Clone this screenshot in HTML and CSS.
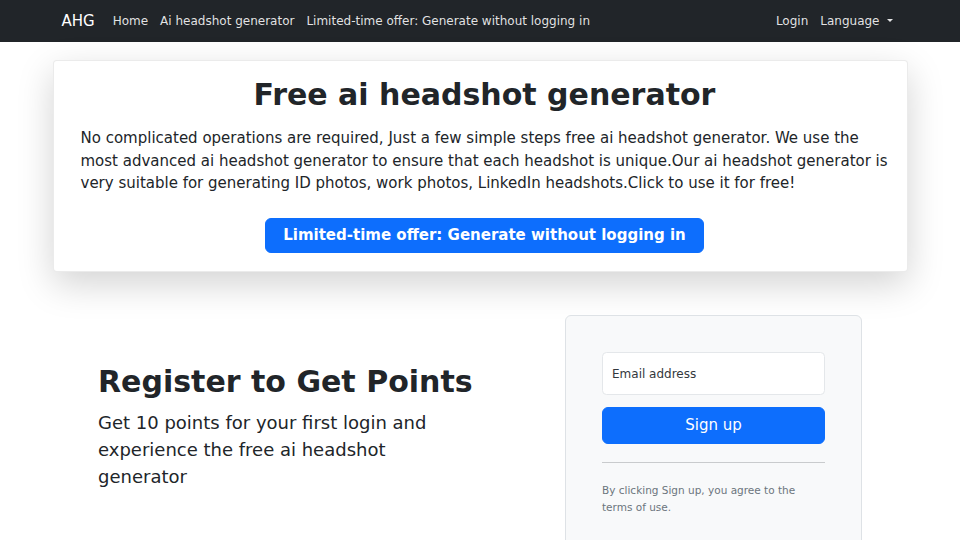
FILE: index.html
```html
<!DOCTYPE html>
<html lang="en">
<head>
<meta charset="utf-8">
<title>Free ai headshot generator - AHG</title>
<link rel="stylesheet" href="styles.css">
</head>
<body>

  <nav class="navbar">
    <div class="container nav-inner">
      <a class="brand" href="#">AHG</a>
      <ul class="nav-links">
        <li><a href="#">Home</a></li>
        <li><a href="#">Ai headshot generator</a></li>
        <li><a href="#">Limited-time offer: Generate without logging in</a></li>
      </ul>
      <ul class="nav-links nav-right">
        <li><a href="#">Login</a></li>
        <li><a href="#" class="dropdown-toggle">Language</a></li>
      </ul>
    </div>
  </nav>

  <div class="container">
    <section class="hero">
      <h1>Free ai headshot generator</h1>
      <p class="lead">No complicated operations are required, Just a few simple steps free ai headshot generator. We use the most advanced ai headshot generator to ensure that each headshot is unique.Our ai headshot generator is very suitable for generating ID photos, work photos, LinkedIn headshots.Click to use it for free!</p>
      <div class="hero-action">
        <a href="#" class="btn btn-lg btn-wide">Limited-time offer: Generate without logging in</a>
      </div>
    </section>
  </div>

  <section class="signup">
    <div class="signup-text">
      <h1>Register to Get Points</h1>
      <p>Get 10 points for your first login and experience the free ai headshot generator</p>
    </div>
    <form class="signup-form" onsubmit="return false;">
      <input type="email" class="form-input" placeholder="Email address">
      <button type="submit" class="btn btn-lg btn-block">Sign up</button>
      <hr>
      <small>By clicking Sign up, you agree to the terms of use.</small>
    </form>
  </section>

</body>
</html>
```

FILE: styles.css
```css
/* Base */
html,
body {
  margin: 0;
  background: #fff;
}

body {
  font-family: "DejaVu Sans", "Liberation Sans", sans-serif;
  font-size: 12px;
  line-height: 1.5;
  color: #212529;
}

a {
  text-decoration: none;
}

.container {
  max-width: 855px;
  margin: 0 auto;
}

/* Navbar */
.navbar {
  background: #212529;
  padding: 6px 0;
}

.nav-inner {
  display: flex;
  align-items: center;
  padding: 0 9px;
  box-sizing: border-box;
}

.brand {
  color: #fff;
  font-size: 15px;
  line-height: 22.5px;
  padding: 3.75px 0;
  margin-right: 12px;
}

.nav-links {
  display: flex;
  list-style: none;
  margin: 0;
  padding: 0;
}

.nav-links a {
  display: block;
  padding: 6px;
  color: rgba(255, 255, 255, 0.88);
}

.nav-right {
  margin-left: auto;
}

.dropdown-toggle::after {
  content: "";
  display: inline-block;
  margin-left: 7px;
  vertical-align: 0.255em;
  border-top: 0.3em solid;
  border-right: 0.3em solid transparent;
  border-left: 0.3em solid transparent;
}

/* Hero card */
.hero {
  margin-top: 18px;
  padding: 16px 18px 18px 27px;
  background: #fff;
  border: 1px solid rgba(0, 0, 0, 0.08);
  border-radius: 4px;
  box-shadow: 0 12px 36px rgba(0, 0, 0, 0.175);
}

.hero h1 {
  margin: 0 0 14px;
  text-align: center;
  font-size: 30px;
  line-height: 36px;
  font-weight: bold;
}

.lead {
  margin: 0 0 12px;
  font-size: 15px;
  line-height: 22.5px;
}

.hero-action {
  display: flex;
  justify-content: center;
  padding-top: 11px;
}

/* Buttons */
.btn {
  display: inline-block;
  box-sizing: border-box;
  background: #0d6efd;
  border: 1px solid #0d6efd;
  color: #fff;
  font-family: inherit;
  text-align: center;
  cursor: pointer;
}

.btn-lg {
  padding: 5.5px 12px;
  font-size: 15px;
  line-height: 22.5px;
  border-radius: 6px;
}

.btn-wide {
  padding-left: 17px;
  padding-right: 17px;
  font-weight: bold;
}

.btn-block {
  display: block;
  width: 100%;
}

/* Sign up section */
.signup {
  max-width: 764px;
  margin: 43px auto 0;
  display: grid;
  grid-template-columns: 1fr 297px;
  column-gap: 35px;
  align-items: center;
}

.signup-text {
  padding-top: 2px;
}

.signup-text h1 {
  margin: 0 0 12px;
  font-size: 30px;
  line-height: 30px;
  font-weight: bold;
}

.signup-text p {
  max-width: 359px;
  margin: 0 0 12px;
  font-size: 18px;
  line-height: 27px;
}

.signup-form {
  padding: 36px 36px 36px;
  background: #f8f9fa;
  border: 1px solid #dee2e6;
  border-radius: 6px;
}

.form-input {
  display: block;
  box-sizing: border-box;
  width: 100%;
  height: 43px;
  margin-bottom: 12px;
  padding: 0 9px;
  font-family: inherit;
  font-size: 12px;
  color: #212529;
  background: #fff;
  border: 1px solid #e4e7ea;
  border-radius: 4.5px;
}

.form-input::placeholder {
  color: #33383d;
}

.signup-form .btn-block {
  padding-top: 6px;
  padding-bottom: 6px;
}

.signup-form hr {
  margin: 18px 0 19px;
  border: 0;
  border-top: 1px solid #c9cbcd;
}

.signup-form small {
  display: block;
  font-size: 10.5px;
  line-height: 17px;
  color: #6c757d;
}
```
